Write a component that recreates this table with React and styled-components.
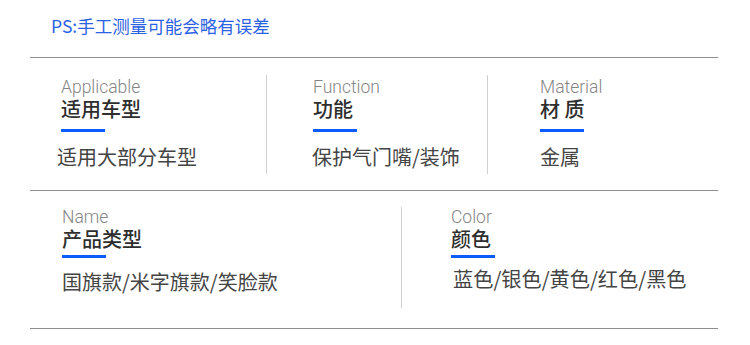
import React from "react";
import styled, { createGlobalStyle } from "styled-components";

const GlobalStyle = createGlobalStyle`
  html, body {
    margin: 0;
    padding: 0;
    background: #fff;
  }
  body {
    font-family: "Noto Sans CJK SC", "Noto Sans", sans-serif;
  }
`;

// whole sheet
const Sheet = styled.div`
  width: 750px;
  height: 345px;
  background: #fff;
  overflow: hidden;
`;

// the blue note at the top
const Note = styled.div`
  box-sizing: border-box;
  height: 58px;
  margin: 0 32px 0 30px;
  padding: 14px 0 0 21px;
  font-size: 17.5px;
  line-height: 24px;
  color: #2b62e3;
  border-bottom: 1px solid #8e8e8e;
`;

// one row of spec cells
const Row = styled.div`
  display: grid;
  grid-template-columns: ${(p) => p.$cols};
  grid-auto-rows: ${(p) => p.$h}px;
  margin: 0 32px 0 30px;
  padding: ${(p) => p.$pad};
  border-bottom: 1px solid #8e8e8e;
`;

// a spec cell, with a divider on its left when it is not the first
const Cell = styled.div`
  display: flex;
  flex-direction: column;
  padding-left: ${(p) => p.$indent}px;
  border-left: ${(p) => (p.$first ? "none" : "1px solid #cfcfcf")};
`;

// english caption, thin grey
const Label = styled.div`
  font-family: Roboto, "Noto Sans", sans-serif;
  font-size: 17.5px;
  font-weight: 300;
  line-height: 19px;
  color: #858585;
  margin-top: ${(p) => p.$top}px;
`;

const Heading = styled.div`
  font-size: 20px;
  font-weight: 500;
  line-height: 24px;
  color: #2e2e2e;
`;

const Bar = styled.div`
  width: 44px;
  height: 3px;
  background: #0a5cff;
  margin-top: ${(p) => p.$top}px;
`;

const Value = styled.div`
  font-size: ${(p) => p.$size || 20}px;
  line-height: 24px;
  color: #444;
  margin-top: ${(p) => p.$top}px;
  margin-left: ${(p) => p.$nudge || 0}px;
  white-space: nowrap;
`;

const Spec = ({ label, heading, value, first, indent, gaps, nudge, size }) => (
  <Cell $first={first} $indent={indent}>
    <Label $top={gaps[0]}>{label}</Label>
    <Heading>{heading}</Heading>
    <Bar $top={gaps[1]} />
    <Value $top={gaps[2]} $nudge={nudge} $size={size}>{value}</Value>
  </Cell>
);

export default function App() {
  return (
    <Sheet>
      <GlobalStyle />
      <Note>PS:手工测量可能会略有误差</Note>
      <Row $cols="236px 221px 1fr" $h={99} $pad="17px 0 16px">
        <Spec first indent={31} nudge={-4} gaps={[3, 8, 13]} label="Applicable" heading="适用车型" value="适用大部分车型" />
        <Spec indent={46} nudge={-1} gaps={[3, 8, 13]} label="Function" heading="功能" value="保护气门嘴/装饰" />
        <Spec indent={52} gaps={[3, 8, 13]} label="Material" heading="材 质" value="金属" />
      </Row>
      <Row $cols="371px 1fr" $h={101} $pad="16px 0 20px">
        <Spec first indent={32} gaps={[1, 4, 12]} label="Name" heading="产品类型" value="国旗款/米字旗款/笑脸款" />
        <Spec indent={49} gaps={[1, 4, 9]} size={20.2} nudge={2} label="Color" heading="颜色" value="蓝色/银色/黄色/红色/黑色" />
      </Row>
    </Sheet>
  );
}
